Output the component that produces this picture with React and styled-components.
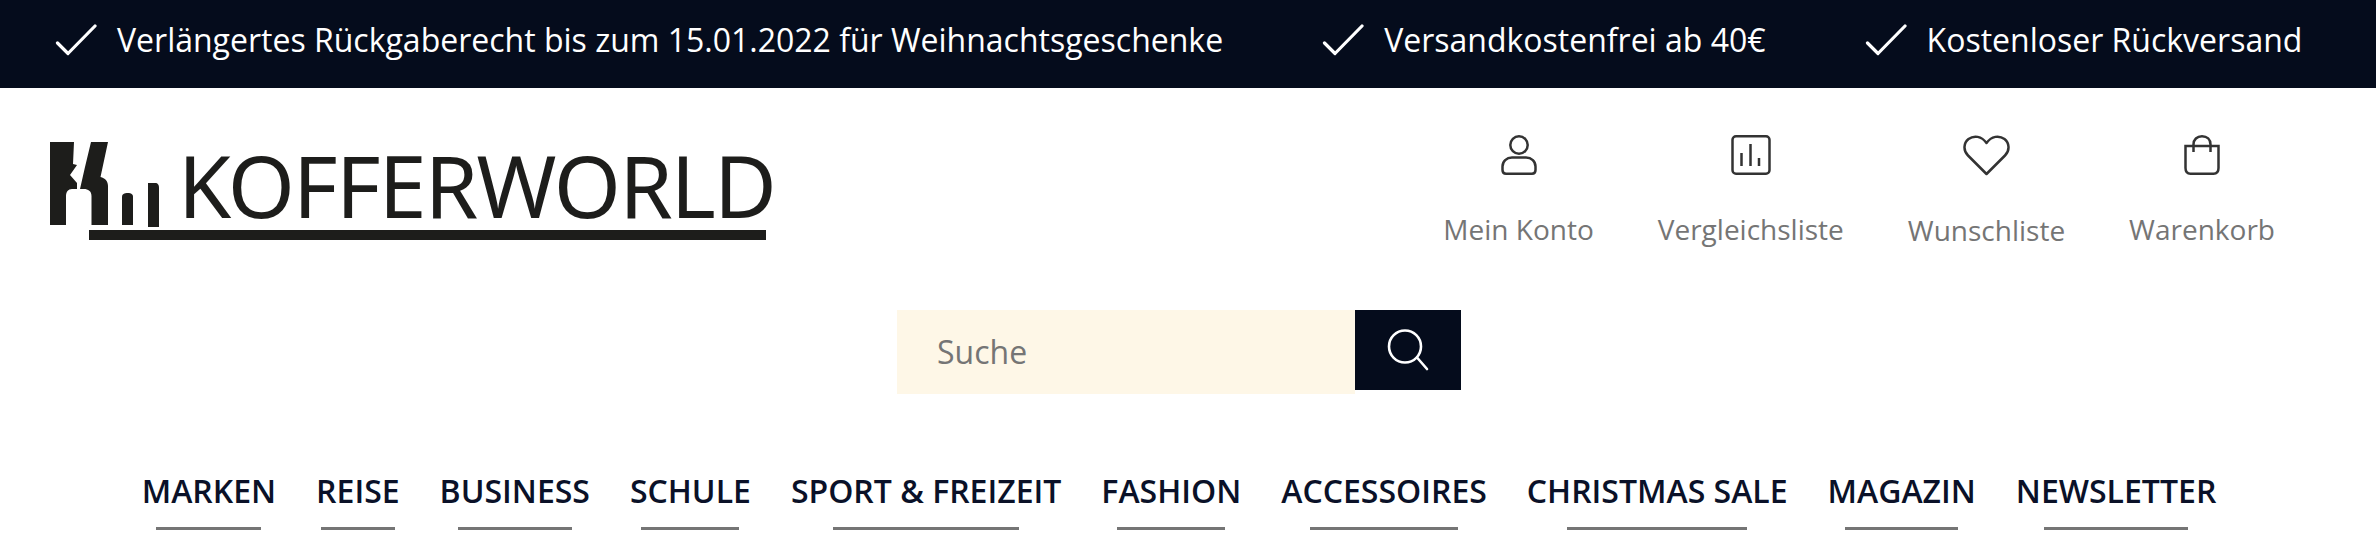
import styled, { createGlobalStyle } from "styled-components";

const GlobalStyle = createGlobalStyle`
  html, body {
    margin: 0;
    padding: 0;
    background: #fff;
  }
  body {
    font-family: "Open Sans", "Liberation Sans", sans-serif;
  }
`;

const TopBar = styled.div`
  display: flex;
  align-items: center;
  gap: 99px;
  height: 88px;
  box-sizing: border-box;
  padding: 0 0 9px 55px;
  background-color: #050c1c;
  color: #fff;
`;

const Usp = styled.div`
  display: flex;
  align-items: center;
  gap: 20px;
  font-size: 32px;
  white-space: nowrap;
`;

const Header = styled.header`
  display: flex;
  justify-content: space-between;
  padding: 54px 101px 0 50px;
  height: 222px;
  box-sizing: border-box;
`;

const Logo = styled.a`
  display: flex;
  flex-direction: column;
  color: #1d1d1b;
`;

const LogoRow = styled.div`
  display: flex;
  align-items: flex-end;
  gap: 18px;
  height: 85px;
`;

const LogoText = styled.span`
  font-family: "Noto Sans", "Open Sans", sans-serif;
  font-size: 86px;
  line-height: 84px;
  letter-spacing: -1.8px;
  white-space: nowrap;
`;

const LogoLine = styled.div`
  width: 677px;
  height: 10px;
  margin: 3px 0 0 39px;
  background-color: #1d1d1b;
`;

const Links = styled.nav`
  display: flex;
  gap: 64px;
  margin-top: -7px;
`;

const LinkItem = styled.a`
  display: flex;
  flex-direction: column;
  align-items: center;
  gap: 35px;
  color: #757575;
  font-size: 28px;
  line-height: 38px;
`;

const SearchRow = styled.div`
  display: flex;
  justify-content: center;
  align-items: flex-start;
  padding-right: 18px;
`;

const SearchInput = styled.div`
  width: 458px;
  height: 84px;
  box-sizing: border-box;
  padding-left: 40px;
  background-color: #fef7e7;
  color: #757575;
  font-size: 32px;
  line-height: 84px;
`;

const SearchButton = styled.button`
  display: flex;
  align-items: center;
  justify-content: center;
  width: 106px;
  height: 80px;
  padding: 0;
  border: 0;
  background-color: #050c1c;
`;

const MainNav = styled.nav`
  display: flex;
  justify-content: center;
  gap: 40px;
  margin-top: 75px;
  padding-right: 18px;
`;

const NavItem = styled.a`
  display: flex;
  flex-direction: column;
  align-items: center;
  color: #0a1128;
  font-size: 32px;
  font-weight: 600;
  line-height: 44px;
  white-space: nowrap;
`;

const NavLine = styled.span`
  display: block;
  width: ${({ $width }) => $width}px;
  height: 3px;
  margin-top: 14px;
  background-color: #757575;
`;

const CheckIcon = () => (
  <svg width="42" height="32" viewBox="0 0 42 32" fill="none" stroke="#fff" strokeWidth="3.2" strokeLinecap="round" strokeLinejoin="round">
    <path d="M2.5 19 L13 29.5 L40 2" />
  </svg>
);

const UserIcon = () => (
  <svg width="36" height="40" viewBox="0 0 36 40" fill="none" stroke="#333" strokeWidth="2.5">
    <circle cx="18" cy="10" r="8.7" />
    <path d="M11 22.5 H25 C30.5 22.5 34.5 26.5 34.5 31.5 V35 C34.5 37.5 33 38.7 31 38.7 H5 C3 38.7 1.5 37.5 1.5 35 V31.5 C1.5 26.5 5.5 22.5 11 22.5 Z" />
  </svg>
);

const ChartIcon = () => (
  <svg width="40" height="40" viewBox="0 0 40 40" fill="none" stroke="#333" strokeWidth="2.5">
    <rect x="1.5" y="1.3" width="37" height="37.4" rx="3.5" />
    <path d="M10.5 18 V31 M19.5 9 V31 M28 23 V31" />
  </svg>
);

const HeartIcon = () => (
  <svg width="47" height="41" viewBox="0 0 47 41" fill="none" stroke="#333" strokeWidth="2.5" strokeLinejoin="round">
    <path d="M23.5 39 L5 20.5 C0 15.5 0.5 8 5.5 4 C11 0 18.5 1 23.5 8 C28.5 1 36 0 41.5 4 C46.5 8 47 15.5 42 20.5 Z" />
  </svg>
);

const BagIcon = () => (
  <svg width="36" height="40" viewBox="0 0 36 40" fill="none" stroke="#333" strokeWidth="2.5">
    <path d="M1.5 11 H34.5 V33 C34.5 36.5 32.5 38.7 29.5 38.7 H6.5 C3.5 38.7 1.5 36.5 1.5 33 Z" />
    <path d="M9.5 17 V9.5 C9.5 4.5 13 1.3 18 1.3 C23 1.3 26.5 4.5 26.5 9.5 V17" />
  </svg>
);

const SearchIcon = () => (
  <svg width="42" height="42" viewBox="0 0 42 42" fill="none" stroke="#fff" strokeWidth="2.6" strokeLinecap="round">
    <circle cx="18" cy="17.5" r="16" />
    <path d="M30 28.5 L40 40" />
  </svg>
);

const usps = [
  "Verlängertes Rückgaberecht bis zum 15.01.2022 für Weihnachtsgeschenke",
  "Versandkostenfrei ab 40€",
  "Kostenloser Rückversand",
];

const links = [
  { label: "Mein Konto", Icon: UserIcon },
  { label: "Vergleichsliste", Icon: ChartIcon },
  { label: "Wunschliste", Icon: HeartIcon },
  { label: "Warenkorb", Icon: BagIcon },
];

const navItems = [
  { label: "MARKEN", line: 105 },
  { label: "REISE", line: 74 },
  { label: "BUSINESS", line: 114 },
  { label: "SCHULE", line: 98 },
  { label: "SPORT & FREIZEIT", line: 186 },
  { label: "FASHION", line: 108 },
  { label: "ACCESSOIRES", line: 148 },
  { label: "CHRISTMAS SALE", line: 180 },
  { label: "MAGAZIN", line: 113 },
  { label: "NEWSLETTER", line: 144 },
];

export default function App() {
  return (
    <>
      <GlobalStyle />
      <TopBar>
        {usps.map((text) => (
          <Usp key={text}>
            <CheckIcon />
            {text}
          </Usp>
        ))}
      </TopBar>
      <Header>
        <Logo>
          <LogoRow>
            <svg width="110" height="85" viewBox="0 0 110 85" fill="#1d1d1b">
              <path d="M0 0 H24 L23 22 L27 23 L20 33 L27 41 V47 H22 C18 47 16 50 16 54 V83 H0 Z" />
              <path d="M41 0 H58 L50.5 35 C55 36 58 39 58 44 V83 H41.5 V54 C41.5 49 38 47 34 47 H30 L35 25 Z" />
              <path d="M72 55 C72 52 74 51 78 51 C81 51 83 52 83 55 V83 H72 Z" />
              <path d="M98 41 H105 C108 41 109 43 109 46 V85 H98 Z" />
            </svg>
            <LogoText>KOFFERWORLD</LogoText>
          </LogoRow>
          <LogoLine />
        </Logo>
        <Links>
          {links.map(({ label, Icon }) => (
            <LinkItem key={label}>
              <Icon />
              {label}
            </LinkItem>
          ))}
        </Links>
      </Header>
      <SearchRow>
        <SearchInput>Suche</SearchInput>
        <SearchButton aria-label="Suche">
          <SearchIcon />
        </SearchButton>
      </SearchRow>
      <MainNav>
        {navItems.map((item) => (
          <NavItem key={item.label}>
            {item.label}
            <NavLine $width={item.line} />
          </NavItem>
        ))}
      </MainNav>
    </>
  );
}
